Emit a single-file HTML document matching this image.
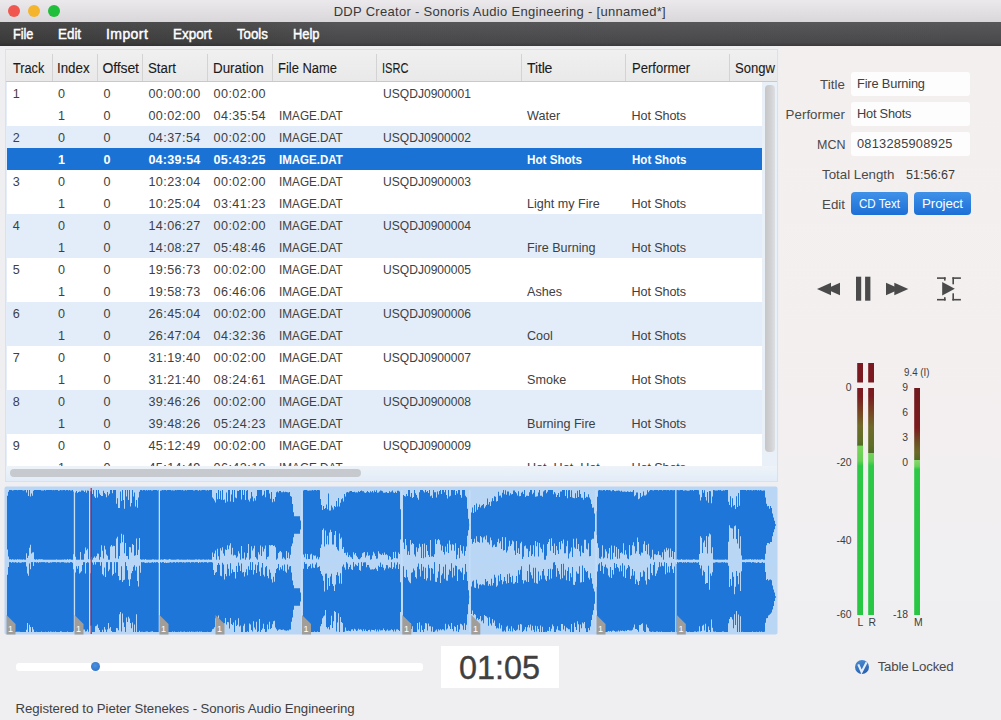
<!DOCTYPE html><html><head><meta charset="utf-8"><style>
html,body{margin:0;padding:0;width:1001px;height:720px;overflow:hidden;position:relative;}
body{font-family:"Liberation Sans",sans-serif;}
.t{position:absolute;white-space:nowrap;line-height:1;}
</style></head><body>
<div style="position:absolute;left:0px;top:0px;width:1001px;height:720px;background:#efeef1;"></div>
<div style="position:absolute;left:779px;top:46px;width:222px;height:674px;background:linear-gradient(#f4efef 0%,#f3eff0 60%,#efeff2 85%);"></div>
<div style="position:absolute;left:0px;top:0px;width:1001px;height:22px;background:linear-gradient(#ebe9eb,#d9d7d9);"></div>
<div style="position:absolute;left:7.55px;top:4.60px;width:12.4px;height:12.4px;border-radius:50%;background:#f0584f;"></div>
<div style="position:absolute;left:27.55px;top:4.60px;width:12.4px;height:12.4px;border-radius:50%;background:#f4b52c;"></div>
<div style="position:absolute;left:47.80px;top:4.60px;width:12.4px;height:12.4px;border-radius:50%;background:#1fbe3b;"></div>
<div class="t" style="left:333.70px;top:5.20px;font-size:13px;color:#383838;letter-spacing:0.294px;">DDP Creator - Sonoris Audio Engineering - [unnamed*]</div>
<div style="position:absolute;left:0px;top:22px;width:1001px;height:24px;background:linear-gradient(rgba(255,255,255,0.05),rgba(0,0,0,0.07) 85%,rgba(0,0,0,0.25)),linear-gradient(to right,#3e3e3e 0px,#454545 250px,#4d4d50 336px,#4f4f52 1001px);"></div>
<div class="t" style="left:12.90px;top:27.15px;font-size:14px;color:#ffffff;transform:scaleX(0.9043);transform-origin:0 0;-webkit-text-stroke:0.45px #ffffff;">File</div>
<div class="t" style="left:58.40px;top:27.15px;font-size:14px;color:#ffffff;transform:scaleX(0.9575);transform-origin:0 0;-webkit-text-stroke:0.45px #ffffff;">Edit</div>
<div class="t" style="left:106.00px;top:27.15px;font-size:14px;color:#ffffff;letter-spacing:0.425px;-webkit-text-stroke:0.45px #ffffff;">Import</div>
<div class="t" style="left:172.50px;top:27.15px;font-size:14px;color:#ffffff;transform:scaleX(0.9589);transform-origin:0 0;-webkit-text-stroke:0.45px #ffffff;">Export</div>
<div class="t" style="left:236.80px;top:27.15px;font-size:14px;color:#ffffff;transform:scaleX(0.9454);transform-origin:0 0;-webkit-text-stroke:0.45px #ffffff;">Tools</div>
<div class="t" style="left:292.80px;top:27.15px;font-size:14px;color:#ffffff;transform:scaleX(0.9203);transform-origin:0 0;-webkit-text-stroke:0.45px #ffffff;">Help</div>
<div style="position:absolute;left:5px;top:49px;width:773px;height:433px;background:#e4edf8;border:1px solid #dde1e7;box-sizing:border-box;"></div>
<div style="position:absolute;left:6px;top:50px;width:771px;height:32px;background:linear-gradient(#f0f0f0,#e9e9e9);border-bottom:1px solid #c9c9c9;box-sizing:border-box;"></div>
<div style="position:absolute;left:52px;top:54px;width:1px;height:27px;background:#d3d3d3;"></div>
<div style="position:absolute;left:97px;top:54px;width:1px;height:27px;background:#d3d3d3;"></div>
<div style="position:absolute;left:142px;top:54px;width:1px;height:27px;background:#d3d3d3;"></div>
<div style="position:absolute;left:207px;top:54px;width:1px;height:27px;background:#d3d3d3;"></div>
<div style="position:absolute;left:272px;top:54px;width:1px;height:27px;background:#d3d3d3;"></div>
<div style="position:absolute;left:376px;top:54px;width:1px;height:27px;background:#d3d3d3;"></div>
<div style="position:absolute;left:521px;top:54px;width:1px;height:27px;background:#d3d3d3;"></div>
<div style="position:absolute;left:625px;top:54px;width:1px;height:27px;background:#d3d3d3;"></div>
<div style="position:absolute;left:729px;top:54px;width:1px;height:27px;background:#d3d3d3;"></div>
<div style="position:absolute;left:7px;top:82px;width:756px;height:384px;overflow:hidden;background:#fff;">
<div style="position:absolute;left:0;top:0px;width:756px;height:22px;background:#ffffff;"></div>
<div style="position:absolute;left:0;top:22px;width:756px;height:22px;background:#ffffff;"></div>
<div style="position:absolute;left:0;top:44px;width:756px;height:22px;background:#e3edf9;"></div>
<div style="position:absolute;left:0;top:66px;width:756px;height:22px;background:#1a72d4;"></div>
<div style="position:absolute;left:0;top:88px;width:756px;height:22px;background:#ffffff;"></div>
<div style="position:absolute;left:0;top:110px;width:756px;height:22px;background:#ffffff;"></div>
<div style="position:absolute;left:0;top:132px;width:756px;height:22px;background:#e3edf9;"></div>
<div style="position:absolute;left:0;top:154px;width:756px;height:22px;background:#e3edf9;"></div>
<div style="position:absolute;left:0;top:176px;width:756px;height:22px;background:#ffffff;"></div>
<div style="position:absolute;left:0;top:198px;width:756px;height:22px;background:#ffffff;"></div>
<div style="position:absolute;left:0;top:220px;width:756px;height:22px;background:#e3edf9;"></div>
<div style="position:absolute;left:0;top:242px;width:756px;height:22px;background:#e3edf9;"></div>
<div style="position:absolute;left:0;top:264px;width:756px;height:22px;background:#ffffff;"></div>
<div style="position:absolute;left:0;top:286px;width:756px;height:22px;background:#ffffff;"></div>
<div style="position:absolute;left:0;top:308px;width:756px;height:22px;background:#e3edf9;"></div>
<div style="position:absolute;left:0;top:330px;width:756px;height:22px;background:#e3edf9;"></div>
<div style="position:absolute;left:0;top:352px;width:756px;height:22px;background:#ffffff;"></div>
<div style="position:absolute;left:0;top:374px;width:756px;height:22px;background:#ffffff;"></div>
<div class="t" style="left:5.70px;top:5.83px;font-size:12.6px;color:#404040;">1</div>
<div class="t" style="left:51.00px;top:5.83px;font-size:12.6px;color:#404040;">0</div>
<div class="t" style="left:96.50px;top:5.83px;font-size:12.6px;color:#404040;">0</div>
<div class="t" style="left:141.40px;top:5.83px;font-size:12.6px;color:#404040;letter-spacing:0.422px;">00:00:00</div>
<div class="t" style="left:206.60px;top:5.83px;font-size:12.6px;color:#404040;letter-spacing:0.422px;">00:02:00</div>
<div class="t" style="left:375.50px;top:5.83px;font-size:12.6px;color:#404040;transform:scaleX(0.9590);transform-origin:0 0;">USQDJ0900001</div>
<div class="t" style="left:51.00px;top:27.83px;font-size:12.6px;color:#404040;">1</div>
<div class="t" style="left:96.50px;top:27.83px;font-size:12.6px;color:#404040;">0</div>
<div class="t" style="left:141.40px;top:27.83px;font-size:12.6px;color:#404040;letter-spacing:0.422px;">00:02:00</div>
<div class="t" style="left:206.60px;top:27.83px;font-size:12.6px;color:#404040;letter-spacing:0.422px;">04:35:54</div>
<div class="t" style="left:271.75px;top:27.83px;font-size:12.6px;color:#404040;transform:scaleX(0.9324);transform-origin:0 0;">IMAGE.DAT</div>
<div class="t" style="left:520.00px;top:27.83px;font-size:12.6px;color:#404040;">Water</div>
<div class="t" style="left:624.50px;top:27.83px;font-size:12.6px;color:#404040;letter-spacing:-0.104px;">Hot Shots</div>
<div class="t" style="left:5.70px;top:49.83px;font-size:12.6px;color:#404040;">2</div>
<div class="t" style="left:51.00px;top:49.83px;font-size:12.6px;color:#404040;">0</div>
<div class="t" style="left:96.50px;top:49.83px;font-size:12.6px;color:#404040;">0</div>
<div class="t" style="left:141.40px;top:49.83px;font-size:12.6px;color:#404040;letter-spacing:0.422px;">04:37:54</div>
<div class="t" style="left:206.60px;top:49.83px;font-size:12.6px;color:#404040;letter-spacing:0.422px;">00:02:00</div>
<div class="t" style="left:271.75px;top:49.83px;font-size:12.6px;color:#404040;transform:scaleX(0.9324);transform-origin:0 0;">IMAGE.DAT</div>
<div class="t" style="left:375.50px;top:49.83px;font-size:12.6px;color:#404040;transform:scaleX(0.9590);transform-origin:0 0;">USQDJ0900002</div>
<div class="t" style="left:51.00px;top:71.83px;font-size:12.6px;color:#ffffff;font-weight:bold;">1</div>
<div class="t" style="left:96.50px;top:71.83px;font-size:12.6px;color:#ffffff;font-weight:bold;">0</div>
<div class="t" style="left:141.40px;top:71.83px;font-size:12.6px;color:#ffffff;font-weight:bold;letter-spacing:0.223px;">04:39:54</div>
<div class="t" style="left:206.60px;top:71.83px;font-size:12.6px;color:#ffffff;font-weight:bold;letter-spacing:0.223px;">05:43:25</div>
<div class="t" style="left:271.75px;top:71.83px;font-size:12.6px;color:#ffffff;font-weight:bold;transform:scaleX(0.9138);transform-origin:0 0;">IMAGE.DAT</div>
<div class="t" style="left:520.00px;top:71.83px;font-size:12.6px;color:#ffffff;font-weight:bold;transform:scaleX(0.9244);transform-origin:0 0;">Hot Shots</div>
<div class="t" style="left:624.50px;top:71.83px;font-size:12.6px;color:#ffffff;font-weight:bold;transform:scaleX(0.9160);transform-origin:0 0;">Hot Shots</div>
<div class="t" style="left:5.70px;top:93.83px;font-size:12.6px;color:#404040;">3</div>
<div class="t" style="left:51.00px;top:93.83px;font-size:12.6px;color:#404040;">0</div>
<div class="t" style="left:96.50px;top:93.83px;font-size:12.6px;color:#404040;">0</div>
<div class="t" style="left:141.40px;top:93.83px;font-size:12.6px;color:#404040;letter-spacing:0.422px;">10:23:04</div>
<div class="t" style="left:206.60px;top:93.83px;font-size:12.6px;color:#404040;letter-spacing:0.422px;">00:02:00</div>
<div class="t" style="left:271.75px;top:93.83px;font-size:12.6px;color:#404040;transform:scaleX(0.9324);transform-origin:0 0;">IMAGE.DAT</div>
<div class="t" style="left:375.50px;top:93.83px;font-size:12.6px;color:#404040;transform:scaleX(0.9590);transform-origin:0 0;">USQDJ0900003</div>
<div class="t" style="left:51.00px;top:115.83px;font-size:12.6px;color:#404040;">1</div>
<div class="t" style="left:96.50px;top:115.83px;font-size:12.6px;color:#404040;">0</div>
<div class="t" style="left:141.40px;top:115.83px;font-size:12.6px;color:#404040;letter-spacing:0.422px;">10:25:04</div>
<div class="t" style="left:206.60px;top:115.83px;font-size:12.6px;color:#404040;letter-spacing:0.422px;">03:41:23</div>
<div class="t" style="left:271.75px;top:115.83px;font-size:12.6px;color:#404040;transform:scaleX(0.9324);transform-origin:0 0;">IMAGE.DAT</div>
<div class="t" style="left:520.00px;top:115.83px;font-size:12.6px;color:#404040;">Light my Fire</div>
<div class="t" style="left:624.50px;top:115.83px;font-size:12.6px;color:#404040;letter-spacing:-0.104px;">Hot Shots</div>
<div class="t" style="left:5.70px;top:137.83px;font-size:12.6px;color:#404040;">4</div>
<div class="t" style="left:51.00px;top:137.83px;font-size:12.6px;color:#404040;">0</div>
<div class="t" style="left:96.50px;top:137.83px;font-size:12.6px;color:#404040;">0</div>
<div class="t" style="left:141.40px;top:137.83px;font-size:12.6px;color:#404040;letter-spacing:0.422px;">14:06:27</div>
<div class="t" style="left:206.60px;top:137.83px;font-size:12.6px;color:#404040;letter-spacing:0.422px;">00:02:00</div>
<div class="t" style="left:271.75px;top:137.83px;font-size:12.6px;color:#404040;transform:scaleX(0.9324);transform-origin:0 0;">IMAGE.DAT</div>
<div class="t" style="left:375.50px;top:137.83px;font-size:12.6px;color:#404040;transform:scaleX(0.9590);transform-origin:0 0;">USQDJ0900004</div>
<div class="t" style="left:51.00px;top:159.83px;font-size:12.6px;color:#404040;">1</div>
<div class="t" style="left:96.50px;top:159.83px;font-size:12.6px;color:#404040;">0</div>
<div class="t" style="left:141.40px;top:159.83px;font-size:12.6px;color:#404040;letter-spacing:0.422px;">14:08:27</div>
<div class="t" style="left:206.60px;top:159.83px;font-size:12.6px;color:#404040;letter-spacing:0.422px;">05:48:46</div>
<div class="t" style="left:271.75px;top:159.83px;font-size:12.6px;color:#404040;transform:scaleX(0.9324);transform-origin:0 0;">IMAGE.DAT</div>
<div class="t" style="left:520.00px;top:159.83px;font-size:12.6px;color:#404040;">Fire Burning</div>
<div class="t" style="left:624.50px;top:159.83px;font-size:12.6px;color:#404040;letter-spacing:-0.104px;">Hot Shots</div>
<div class="t" style="left:5.70px;top:181.83px;font-size:12.6px;color:#404040;">5</div>
<div class="t" style="left:51.00px;top:181.83px;font-size:12.6px;color:#404040;">0</div>
<div class="t" style="left:96.50px;top:181.83px;font-size:12.6px;color:#404040;">0</div>
<div class="t" style="left:141.40px;top:181.83px;font-size:12.6px;color:#404040;letter-spacing:0.422px;">19:56:73</div>
<div class="t" style="left:206.60px;top:181.83px;font-size:12.6px;color:#404040;letter-spacing:0.422px;">00:02:00</div>
<div class="t" style="left:271.75px;top:181.83px;font-size:12.6px;color:#404040;transform:scaleX(0.9324);transform-origin:0 0;">IMAGE.DAT</div>
<div class="t" style="left:375.50px;top:181.83px;font-size:12.6px;color:#404040;transform:scaleX(0.9590);transform-origin:0 0;">USQDJ0900005</div>
<div class="t" style="left:51.00px;top:203.83px;font-size:12.6px;color:#404040;">1</div>
<div class="t" style="left:96.50px;top:203.83px;font-size:12.6px;color:#404040;">0</div>
<div class="t" style="left:141.40px;top:203.83px;font-size:12.6px;color:#404040;letter-spacing:0.422px;">19:58:73</div>
<div class="t" style="left:206.60px;top:203.83px;font-size:12.6px;color:#404040;letter-spacing:0.422px;">06:46:06</div>
<div class="t" style="left:271.75px;top:203.83px;font-size:12.6px;color:#404040;transform:scaleX(0.9324);transform-origin:0 0;">IMAGE.DAT</div>
<div class="t" style="left:520.00px;top:203.83px;font-size:12.6px;color:#404040;">Ashes</div>
<div class="t" style="left:624.50px;top:203.83px;font-size:12.6px;color:#404040;letter-spacing:-0.104px;">Hot Shots</div>
<div class="t" style="left:5.70px;top:225.83px;font-size:12.6px;color:#404040;">6</div>
<div class="t" style="left:51.00px;top:225.83px;font-size:12.6px;color:#404040;">0</div>
<div class="t" style="left:96.50px;top:225.83px;font-size:12.6px;color:#404040;">0</div>
<div class="t" style="left:141.40px;top:225.83px;font-size:12.6px;color:#404040;letter-spacing:0.422px;">26:45:04</div>
<div class="t" style="left:206.60px;top:225.83px;font-size:12.6px;color:#404040;letter-spacing:0.422px;">00:02:00</div>
<div class="t" style="left:271.75px;top:225.83px;font-size:12.6px;color:#404040;transform:scaleX(0.9324);transform-origin:0 0;">IMAGE.DAT</div>
<div class="t" style="left:375.50px;top:225.83px;font-size:12.6px;color:#404040;transform:scaleX(0.9590);transform-origin:0 0;">USQDJ0900006</div>
<div class="t" style="left:51.00px;top:247.83px;font-size:12.6px;color:#404040;">1</div>
<div class="t" style="left:96.50px;top:247.83px;font-size:12.6px;color:#404040;">0</div>
<div class="t" style="left:141.40px;top:247.83px;font-size:12.6px;color:#404040;letter-spacing:0.422px;">26:47:04</div>
<div class="t" style="left:206.60px;top:247.83px;font-size:12.6px;color:#404040;letter-spacing:0.422px;">04:32:36</div>
<div class="t" style="left:271.75px;top:247.83px;font-size:12.6px;color:#404040;transform:scaleX(0.9324);transform-origin:0 0;">IMAGE.DAT</div>
<div class="t" style="left:520.00px;top:247.83px;font-size:12.6px;color:#404040;">Cool</div>
<div class="t" style="left:624.50px;top:247.83px;font-size:12.6px;color:#404040;letter-spacing:-0.104px;">Hot Shots</div>
<div class="t" style="left:5.70px;top:269.83px;font-size:12.6px;color:#404040;">7</div>
<div class="t" style="left:51.00px;top:269.83px;font-size:12.6px;color:#404040;">0</div>
<div class="t" style="left:96.50px;top:269.83px;font-size:12.6px;color:#404040;">0</div>
<div class="t" style="left:141.40px;top:269.83px;font-size:12.6px;color:#404040;letter-spacing:0.422px;">31:19:40</div>
<div class="t" style="left:206.60px;top:269.83px;font-size:12.6px;color:#404040;letter-spacing:0.422px;">00:02:00</div>
<div class="t" style="left:271.75px;top:269.83px;font-size:12.6px;color:#404040;transform:scaleX(0.9324);transform-origin:0 0;">IMAGE.DAT</div>
<div class="t" style="left:375.50px;top:269.83px;font-size:12.6px;color:#404040;transform:scaleX(0.9590);transform-origin:0 0;">USQDJ0900007</div>
<div class="t" style="left:51.00px;top:291.83px;font-size:12.6px;color:#404040;">1</div>
<div class="t" style="left:96.50px;top:291.83px;font-size:12.6px;color:#404040;">0</div>
<div class="t" style="left:141.40px;top:291.83px;font-size:12.6px;color:#404040;letter-spacing:0.422px;">31:21:40</div>
<div class="t" style="left:206.60px;top:291.83px;font-size:12.6px;color:#404040;letter-spacing:0.422px;">08:24:61</div>
<div class="t" style="left:271.75px;top:291.83px;font-size:12.6px;color:#404040;transform:scaleX(0.9324);transform-origin:0 0;">IMAGE.DAT</div>
<div class="t" style="left:520.00px;top:291.83px;font-size:12.6px;color:#404040;">Smoke</div>
<div class="t" style="left:624.50px;top:291.83px;font-size:12.6px;color:#404040;letter-spacing:-0.104px;">Hot Shots</div>
<div class="t" style="left:5.70px;top:313.83px;font-size:12.6px;color:#404040;">8</div>
<div class="t" style="left:51.00px;top:313.83px;font-size:12.6px;color:#404040;">0</div>
<div class="t" style="left:96.50px;top:313.83px;font-size:12.6px;color:#404040;">0</div>
<div class="t" style="left:141.40px;top:313.83px;font-size:12.6px;color:#404040;letter-spacing:0.422px;">39:46:26</div>
<div class="t" style="left:206.60px;top:313.83px;font-size:12.6px;color:#404040;letter-spacing:0.422px;">00:02:00</div>
<div class="t" style="left:271.75px;top:313.83px;font-size:12.6px;color:#404040;transform:scaleX(0.9324);transform-origin:0 0;">IMAGE.DAT</div>
<div class="t" style="left:375.50px;top:313.83px;font-size:12.6px;color:#404040;transform:scaleX(0.9590);transform-origin:0 0;">USQDJ0900008</div>
<div class="t" style="left:51.00px;top:335.83px;font-size:12.6px;color:#404040;">1</div>
<div class="t" style="left:96.50px;top:335.83px;font-size:12.6px;color:#404040;">0</div>
<div class="t" style="left:141.40px;top:335.83px;font-size:12.6px;color:#404040;letter-spacing:0.422px;">39:48:26</div>
<div class="t" style="left:206.60px;top:335.83px;font-size:12.6px;color:#404040;letter-spacing:0.422px;">05:24:23</div>
<div class="t" style="left:271.75px;top:335.83px;font-size:12.6px;color:#404040;transform:scaleX(0.9324);transform-origin:0 0;">IMAGE.DAT</div>
<div class="t" style="left:520.00px;top:335.83px;font-size:12.6px;color:#404040;">Burning Fire</div>
<div class="t" style="left:624.50px;top:335.83px;font-size:12.6px;color:#404040;letter-spacing:-0.104px;">Hot Shots</div>
<div class="t" style="left:5.70px;top:357.83px;font-size:12.6px;color:#404040;">9</div>
<div class="t" style="left:51.00px;top:357.83px;font-size:12.6px;color:#404040;">0</div>
<div class="t" style="left:96.50px;top:357.83px;font-size:12.6px;color:#404040;">0</div>
<div class="t" style="left:141.40px;top:357.83px;font-size:12.6px;color:#404040;letter-spacing:0.422px;">45:12:49</div>
<div class="t" style="left:206.60px;top:357.83px;font-size:12.6px;color:#404040;letter-spacing:0.422px;">00:02:00</div>
<div class="t" style="left:271.75px;top:357.83px;font-size:12.6px;color:#404040;transform:scaleX(0.9324);transform-origin:0 0;">IMAGE.DAT</div>
<div class="t" style="left:375.50px;top:357.83px;font-size:12.6px;color:#404040;transform:scaleX(0.9590);transform-origin:0 0;">USQDJ0900009</div>
<div class="t" style="left:51.00px;top:379.83px;font-size:12.6px;color:#404040;">1</div>
<div class="t" style="left:96.50px;top:379.83px;font-size:12.6px;color:#404040;">0</div>
<div class="t" style="left:141.40px;top:379.83px;font-size:12.6px;color:#404040;letter-spacing:0.422px;">45:14:49</div>
<div class="t" style="left:206.60px;top:379.83px;font-size:12.6px;color:#404040;letter-spacing:0.422px;">06:42:18</div>
<div class="t" style="left:271.75px;top:379.83px;font-size:12.6px;color:#404040;transform:scaleX(0.9324);transform-origin:0 0;">IMAGE.DAT</div>
<div class="t" style="left:520.00px;top:379.83px;font-size:12.6px;color:#404040;">Hot, Hot, Hot</div>
<div class="t" style="left:624.50px;top:379.83px;font-size:12.6px;color:#404040;letter-spacing:-0.104px;">Hot Shots</div>
</div>
<div class="t" style="left:12.70px;top:60.75px;font-size:14px;color:#1a1a1a;transform:scaleX(0.9077);transform-origin:0 0;-webkit-text-stroke:0.1px #1a1a1a;">Track</div>
<div class="t" style="left:57.40px;top:60.75px;font-size:14px;color:#1a1a1a;transform:scaleX(0.9519);transform-origin:0 0;-webkit-text-stroke:0.1px #1a1a1a;">Index</div>
<div class="t" style="left:102.50px;top:60.75px;font-size:14px;color:#1a1a1a;letter-spacing:-0.118px;-webkit-text-stroke:0.1px #1a1a1a;">Offset</div>
<div class="t" style="left:147.60px;top:60.75px;font-size:14px;color:#1a1a1a;transform:scaleX(0.9470);transform-origin:0 0;-webkit-text-stroke:0.1px #1a1a1a;">Start</div>
<div class="t" style="left:213.00px;top:60.75px;font-size:14px;color:#1a1a1a;transform:scaleX(0.9562);transform-origin:0 0;-webkit-text-stroke:0.1px #1a1a1a;">Duration</div>
<div class="t" style="left:277.50px;top:60.75px;font-size:14px;color:#1a1a1a;transform:scaleX(0.9248);transform-origin:0 0;-webkit-text-stroke:0.1px #1a1a1a;">File Name</div>
<div class="t" style="left:381.60px;top:60.75px;font-size:14px;color:#1a1a1a;transform:scaleX(0.7893);transform-origin:0 0;-webkit-text-stroke:0.1px #1a1a1a;">ISRC</div>
<div class="t" style="left:527.00px;top:60.75px;font-size:14px;color:#1a1a1a;letter-spacing:-0.132px;-webkit-text-stroke:0.1px #1a1a1a;">Title</div>
<div class="t" style="left:631.50px;top:60.75px;font-size:14px;color:#1a1a1a;transform:scaleX(0.9319);transform-origin:0 0;-webkit-text-stroke:0.1px #1a1a1a;">Performer</div>
<div class="t" style="left:735.00px;top:60.75px;font-size:14px;color:#1a1a1a;transform:scaleX(0.9344);transform-origin:0 0;-webkit-text-stroke:0.1px #1a1a1a;">Songw</div>
<div style="position:absolute;left:762px;top:82px;width:15px;height:384px;background:#eaf0f7;"></div>
<div style="position:absolute;left:764.5px;top:84.7px;width:10px;height:367.6px;background:linear-gradient(to right,#c6c6c8,#d2d2d4 60%,#dedfe2);border-radius:4px;"></div>
<div style="position:absolute;left:6px;top:466px;width:771px;height:15px;background:linear-gradient(#eef3f9,#e2ecf8);"></div>
<div style="position:absolute;left:10px;top:469px;width:351px;height:8px;background:#c6c9cd;border-radius:4px;"></div>
<svg style="position:absolute;left:0;top:0" width="1001" height="720">
<rect x="4.5" y="486.5" width="773" height="148" rx="2" fill="#b9d6f5"/>
<path d="M7,495.8H8V491.7H9V490.0H10V490.0H11V490.0H12V490.5H13V490.3H14V490.0H15V490.0H16V490.0H17V490.3H18V490.1H19V490.0H20V490.0H21V490.0H22V490.2H23V490.4H24V490.3H25V490.0H26V492.4H27V490.0H28V495.9H29V490.0H30V496.6H31V493.4H32V495.7H33V490.8H34V490.0H35V490.0H36V490.0H37V490.0H38V490.0H39V490.0H40V490.0H41V490.4H42V490.6H43V490.5H44V490.0H45V490.6H46V490.0H47V490.0H48V490.0H49V490.0H50V490.0H51V490.0H52V490.2H53V490.0H54V490.2H55V490.0H56V490.0H57V490.1H58V490.7H59V490.6H60V490.0H61V490.3H62V490.2H63V490.1H64V490.0H65V490.4H66V490.0H67V490.0H68V490.4H69V490.0H70V490.5H71V490.6H72V490.0H73V491.5H74V492.1H75V492.6H76V491.0H77V493.0H78V492.1H79V491.6H80V491.8H81V490.4H82V490.4H83V490.7H84V492.1H85V490.6H86V492.8H87V490.6H88V490.8H89V491.0H90V491.2H91V491.2H92V494.1H93V490.0H94V496.6H95V498.0H96V490.0H97V497.4H98V490.0H99V493.5H100V495.0H101V496.1H102V496.0H103V490.8H104V493.1H105V494.3H106V497.3H107V491.9H108V495.4H109V493.7H110V490.0H111V490.0H112V493.2H113V490.0H114V490.0H115V490.0H116V503.8H117V498.2H118V507.9H119V508.1H120V491.4H121V500.9H122V490.0H123V500.0H124V508.7H125V490.0H126V496.4H127V490.0H128V500.0H129V490.0H130V506.4H131V502.9H132V490.0H133V496.4H134V492.5H135V506.5H136V500.1H137V507.7H138V497.4H139V491.7H140V490.0H141V490.0H142V490.5H143V490.0H144V490.0H145V490.6H146V490.0H147V490.6H148V490.0H149V490.3H150V490.0H151V490.4H152V490.6H153V490.0H154V490.1H155V490.0H156V490.0H157V490.4H158V490.0H159V490.0H160V490.7H161V490.6H162V490.0H163V490.2H164V490.0H165V490.0H166V490.4H167V490.0H168V490.0H169V490.0H170V490.0H171V490.5H172V490.3H173V490.6H174V490.6H175V490.0H176V490.2H177V490.0H178V490.1H179V490.0H180V490.0H181V490.2H182V490.0H183V490.4H184V490.5H185V490.0H186V490.4H187V490.0H188V490.0H189V490.0H190V490.0H191V490.0H192V490.0H193V490.4H194V490.4H195V490.0H196V490.0H197V490.2H198V490.7H199V490.0H200V490.6H201V490.2H202V490.0H203V490.0H204V490.0H205V490.2H206V490.5H207V490.0H208V490.6H209V490.0H210V490.0H211V490.0H212V497.5H213V498.7H214V500.4H215V502.4H216V493.1H217V499.3H218V490.0H219V498.9H220V490.8H221V499.7H222V490.0H223V499.9H224V499.6H225V502.7H226V492.4H227V501.5H228V490.0H229V490.0H230V501.4H231V494.4H232V490.0H233V502.1H234V490.0H235V497.6H236V498.2H237V490.8H238V490.9H239V490.0H240V490.0H241V499.6H242V490.0H243V495.0H244V490.0H245V500.0H246V490.8H247V490.0H248V499.7H249V501.5H250V498.5H251V492.1H252V496.4H253V501.3H254V498.2H255V500.6H256V496.1H257V490.0H258V490.0H259V490.0H260V490.0H261V490.0H262V495.8H263V494.7H264V490.7H265V497.3H266V490.0H267V490.0H268V490.0H269V493.5H270V498.8H271V492.1H272V502.3H273V499.0H274V501.5H275V496.9H276V492.3H277V491.5H278V492.6H279V491.1H280V491.0H281V492.2H282V492.3H283V491.6H284V492.3H285V491.7H286V491.9H287V492.3H288V492.4H289V491.9H290V495.9H291V496.8H292V504.0H293V512.3H294V516.2H295V516.2H296V516.2H297V516.2H298V516.2H299V516.2H300V520.6H301V525.0H302V525.0H303V490.4H304V490.0H305V490.0H306V490.0H307V490.4H308V490.7H309V490.5H310V490.5H311V490.4H312V490.0H313V490.6H314V490.0H315V490.0H316V490.6H317V490.0H318V490.0H319V490.3H320V499.0H321V505.0H322V509.9H323V506.1H324V509.0H325V507.9H326V504.5H327V509.2H328V493.6H329V510.4H330V510.4H331V505.5H332V507.6H333V509.5H334V505.9H335V507.0H336V500.9H337V506.6H338V498.0H339V506.6H340V502.8H341V499.2H342V498.2H343V501.4H344V494.1H345V496.5H346V492.4H347V492.1H348V492.6H349V491.6H350V490.9H351V491.0H352V492.1H353V492.0H354V491.8H355V492.5H356V492.3H357V492.4H358V491.2H359V492.0H360V491.0H361V490.5H362V491.2H363V491.3H364V492.5H365V492.9H366V492.2H367V491.1H368V492.1H369V492.7H370V491.2H371V492.2H372V490.9H373V492.4H374V490.5H375V491.9H376V490.2H377V492.8H378V492.5H379V491.6H380V490.5H381V490.7H382V491.2H383V492.7H384V492.7H385V492.6H386V491.9H387V493.1H388V493.0H389V491.2H390V492.3H391V491.4H392V490.4H393V492.5H394V492.9H395V491.8H396V492.9H397V490.8H398V490.7H399V491.6H400V509.2H401V525.0H402V525.0H403V495.0H404V496.1H405V496.4H406V494.1H407V495.9H408V490.0H409V490.0H410V496.8H411V492.9H412V498.0H413V497.1H414V490.0H415V493.3H416V494.9H417V497.8H418V499.7H419V492.3H420V490.0H421V490.0H422V490.0H423V491.2H424V492.6H425V490.0H426V491.9H427V491.1H428V493.0H429V490.0H430V496.3H431V495.5H432V498.1H433V490.0H434V492.3H435V492.3H436V497.5H437V491.6H438V494.4H439V491.0H440V490.0H441V494.1H442V490.0H443V490.0H444V492.3H445V490.0H446V494.9H447V498.5H448V490.0H449V496.5H450V495.7H451V490.0H452V490.0H453V490.3H454V490.0H455V495.0H456V490.9H457V493.5H458V490.0H459V490.0H460V495.1H461V497.8H462V490.0H463V490.0H464V490.0H465V495.8H466V497.2H467V508.7H468V518.8H469V523.8H470V525.0H471V512.6H472V507.4H473V513.1H474V505.1H475V511.7H476V503.5H477V509.8H478V507.1H479V504.5H480V507.4H481V505.8H482V505.1H483V504.1H484V508.3H485V506.5H486V505.0H487V498.4H488V504.6H489V502.0H490V505.9H491V501.6H492V498.2H493V500.9H494V496.3H495V496.7H496V501.6H497V501.0H498V491.8H499V495.8H500V495.5H501V497.6H502V492.7H503V490.0H504V494.2H505V490.3H506V494.7H507V491.5H508V491.5H509V495.5H510V493.3H511V494.4H512V493.9H513V490.6H514V490.5H515V492.1H516V493.2H517V495.6H518V491.2H519V496.2H520V496.0H521V492.7H522V491.8H523V493.9H524V490.0H525V497.1H526V495.7H527V495.7H528V496.0H529V492.3H530V490.0H531V490.0H532V494.3H533V492.8H534V490.0H535V496.8H536V496.4H537V496.3H538V492.4H539V490.0H540V495.8H541V495.8H542V496.8H543V491.5H544V490.6H545V490.0H546V493.3H547V491.7H548V490.0H549V490.0H550V490.1H551V490.0H552V490.0H553V494.2H554V491.9H555V493.5H556V497.0H557V495.0H558V493.1H559V496.9H560V491.6H561V491.4H562V490.0H563V490.0H564V490.0H565V495.9H566V490.0H567V498.2H568V490.3H569V490.0H570V497.0H571V490.2H572V497.5H573V497.9H574V498.2H575V493.3H576V498.1H577V490.7H578V496.9H579V490.0H580V493.9H581V497.8H582V497.8H583V499.8H584V492.1H585V498.0H586V496.8H587V497.2H588V494.3H589V497.6H590V499.6H591V504.0H592V507.8H593V507.4H594V513.6H595V525.0H596V511.2H597V496.7H598V490.6H599V490.0H600V490.3H601V490.2H602V490.5H603V490.0H604V490.0H605V490.7H606V490.0H607V490.0H608V490.2H609V490.0H610V490.4H611V491.3H612V490.2H613V490.1H614V491.1H615V491.2H616V490.8H617V490.7H618V490.4H619V490.8H620V491.5H621V490.7H622V491.7H623V491.7H624V491.4H625V491.7H626V492.0H627V491.2H628V491.8H629V491.9H630V491.5H631V491.9H632V491.7H633V490.0H634V496.3H635V495.3H636V492.5H637V492.5H638V499.2H639V498.4H640V493.1H641V497.0H642V495.7H643V491.6H644V495.6H645V495.4H646V494.6H647V490.3H648V492.3H649V490.7H650V490.0H651V490.0H652V490.3H653V490.5H654V490.0H655V490.0H656V490.0H657V490.0H658V490.4H659V490.0H660V490.0H661V490.0H662V490.4H663V490.0H664V490.0H665V490.0H666V490.2H667V490.0H668V490.0H669V490.6H670V490.1H671V490.0H672V490.2H673V490.2H674V490.0H675V490.0H676V490.2H677V490.0H678V490.3H679V490.2H680V490.0H681V490.0H682V490.0H683V490.7H684V490.5H685V490.3H686V490.4H687V490.8H688V490.7H689V490.5H690V490.0H691V490.3H692V490.0H693V490.7H694V490.0H695V490.0H696V490.0H697V490.0H698V490.3H699V494.6H700V500.5H701V497.2H702V490.0H703V492.8H704V490.3H705V497.1H706V500.4H707V491.9H708V502.7H709V491.0H710V491.2H711V503.2H712V496.6H713V490.0H714V490.3H715V490.4H716V490.4H717V490.6H718V490.0H719V490.2H720V490.1H721V490.8H722V490.7H723V490.2H724V490.5H725V490.0H726V490.0H727V490.0H728V501.7H729V504.9H730V496.3H731V507.3H732V498.2H733V505.8H734V505.1H735V508.9H736V496.3H737V506.9H738V493.0H739V505.8H740V490.0H741V490.0H742V490.0H743V490.0H744V490.0H745V490.0H746V490.4H747V490.0H748V490.0H749V490.3H750V490.1H751V490.3H752V490.5H753V490.0H754V490.3H755V490.0H756V490.0H757V490.6H758V490.0H759V490.6H760V490.0H761V490.5H762V490.7H763V490.5H764V490.6H765V497.5H766V503.8H767V506.2H768V506.0H769V508.8H770V505.9H771V508.1H772V513.4H773V517.5H774V520.8H775V524.3H776V525.7H775V529.2H774V532.3H773V536.2H772V541.9H771V542.1H770V543.7H769V543.1H768V543.1H767V545.2H766V553.7H765V560.0H764V560.0H763V559.2H762V559.2H761V560.0H760V559.8H759V560.0H758V559.4H757V560.0H756V559.5H755V559.6H754V560.0H753V559.4H752V560.0H751V559.1H750V559.5H749V559.6H748V559.8H747V559.6H746V559.4H745V560.0H744V560.0H743V560.0H742V555.6H741V536.3H740V548.6H739V529.0H738V543.5H737V539.1H736V525.6H735V526.2H734V538.8H733V528.6H732V528.3H731V527.7H730V525.3H729V541.7H728V560.0H727V560.0H726V559.4H725V560.0H724V560.0H723V560.0H722V560.0H721V560.0H720V560.0H719V560.0H718V559.7H717V560.0H716V560.0H715V559.8H714V559.5H713V547.2H712V553.2H711V534.5H710V533.4H709V536.6H708V553.5H707V535.9H706V546.9H705V540.6H704V542.6H703V553.1H702V537.7H701V536.3H700V554.1H699V560.0H698V560.0H697V560.0H696V560.0H695V559.4H694V559.3H693V560.0H692V560.0H691V560.0H690V560.0H689V559.8H688V560.0H687V559.4H686V560.0H685V560.0H684V560.0H683V560.0H682V559.0H681V560.0H680V560.0H679V560.0H678V559.6H677V560.0H676V560.0H675V552.1H674V559.0H673V551.0H672V557.0H671V548.5H670V557.5H669V548.4H668V550.3H667V547.7H666V551.7H665V549.5H664V559.9H663V552.3H662V557.3H661V555.3H660V555.1H659V551.2H658V554.6H657V555.0H656V554.3H655V554.3H654V560.0H653V549.8H652V557.2H651V558.7H650V555.5H649V543.7H648V554.3H647V545.1H646V551.1H645V541.2H644V544.2H643V552.8H642V552.6H641V555.5H640V554.1H639V542.0H638V537.5H637V551.2H636V553.5H635V546.2H634V542.2H633V545.2H632V555.0H631V555.4H630V545.0H629V559.3H628V558.4H627V554.4H626V550.3H625V554.7H624V543.3H623V553.6H622V552.2H621V552.9H620V558.6H619V548.9H618V558.8H617V547.0H616V556.7H615V545.7H614V552.8H613V559.3H612V545.5H611V559.8H610V547.9H609V553.6H608V558.3H607V551.6H606V549.2H605V557.6H604V558.5H603V545.2H602V556.8H601V558.8H600V558.2H599V547.8H598V543.2H597V535.1H596V525.0H595V531.5H594V538.7H593V538.7H592V539.7H591V555.9H590V556.2H589V543.2H588V549.6H587V548.8H586V539.8H585V539.7H584V552.9H583V552.6H582V545.7H581V556.3H580V551.3H579V544.0H578V548.9H577V538.4H576V548.8H575V547.5H574V538.7H573V557.0H572V547.6H571V551.5H570V553.4H569V558.6H568V540.7H567V546.2H566V553.2H565V553.3H564V539.6H563V543.6H562V541.0H561V549.2H560V542.1H559V554.0H558V550.2H557V546.0H556V555.0H555V543.6H554V553.1H553V546.1H552V538.3H551V550.8H550V539.0H549V542.1H548V544.0H547V555.8H546V560.0H545V560.0H544V544.4H543V552.5H542V549.0H541V547.4H540V542.9H539V556.5H538V542.2H537V546.2H536V541.0H535V556.5H534V545.3H533V554.2H532V556.0H531V545.2H530V551.2H529V556.9H528V548.7H527V548.6H526V545.5H525V546.3H524V556.7H523V559.1H522V541.7H521V543.3H520V554.1H519V548.2H518V553.1H517V541.1H516V555.1H515V550.6H514V541.4H513V540.6H512V544.2H511V545.9H510V540.7H509V546.5H508V550.4H507V552.5H506V537.2H505V550.1H504V550.5H503V537.0H502V549.0H501V541.3H500V543.2H499V538.7H498V542.0H497V546.7H496V547.1H495V544.4H494V545.5H493V547.2H492V540.2H491V537.5H490V544.5H489V542.5H488V542.3H487V535.4H486V539.6H485V536.6H484V537.5H483V542.5H482V537.3H481V536.1H480V542.7H479V542.1H478V541.6H477V536.3H476V542.7H475V538.7H474V542.1H473V543.8H472V539.1H471V525.0H470V526.2H469V530.2H468V535.7H467V546.5H466V551.1H465V555.7H464V546.3H463V553.6H462V550.8H461V544.9H460V558.2H459V548.1H458V554.8H457V559.3H456V543.3H455V550.7H454V544.8H453V544.2H452V550.4H451V544.4H450V540.6H449V552.9H448V543.8H447V551.8H446V546.5H445V554.5H444V551.9H443V545.8H442V550.4H441V544.5H440V540.2H439V539.0H438V540.3H437V544.1H436V539.2H435V554.2H434V557.1H433V556.3H432V556.6H431V540.0H430V556.9H429V554.9H428V551.1H427V544.9H426V557.3H425V543.5H424V558.2H423V544.1H422V558.0H421V546.8H420V543.7H419V548.2H418V551.8H417V547.3H416V556.4H415V554.5H414V544.1H413V542.9H412V544.5H411V540.1H410V555.0H409V551.3H408V554.8H407V545.2H406V538.9H405V549.1H404V542.5H403V525.0H402V525.0H401V539.4H400V554.0H399V552.4H398V558.4H397V558.3H396V551.7H395V558.0H394V551.9H393V559.3H392V560.0H391V557.0H390V555.9H389V560.0H388V555.2H387V554.2H386V554.7H385V552.6H384V554.9H383V553.5H382V555.1H381V554.2H380V553.6H379V551.3H378V558.6H377V558.7H376V555.9H375V553.5H374V551.7H373V555.4H372V559.3H371V560.0H370V555.3H369V555.7H368V552.3H367V555.5H366V557.4H365V551.9H364V552.6H363V553.2H362V557.1H361V558.2H360V559.4H359V559.1H358V557.2H357V555.8H356V552.9H355V554.5H354V552.2H353V559.1H352V557.5H351V556.7H350V555.2H349V557.1H348V552.6H347V555.2H346V552.7H345V552.9H344V546.9H343V548.9H342V537.4H341V538.7H340V533.6H339V550.8H338V549.6H337V547.1H336V530.9H335V535.1H334V544.6H333V544.5H332V531.9H331V529.8H330V532.5H329V544.4H328V535.7H327V544.3H326V530.6H325V546.6H324V528.6H323V530.0H322V544.6H321V547.9H320V557.3H319V559.5H318V556.7H317V558.4H316V555.6H315V555.7H314V555.3H313V559.7H312V553.8H311V554.4H310V559.0H309V559.0H308V554.1H307V559.2H306V553.8H305V557.2H304V554.6H303V525.0H302V525.0H301V529.4H300V533.8H299V533.8H298V533.8H297V533.8H296V533.8H295V533.8H294V537.2H293V543.4H292V546.3H291V554.7H290V558.5H289V552.5H288V558.0H287V551.0H286V560.0H285V558.5H284V557.3H283V558.7H282V552.3H281V551.1H280V551.8H279V553.1H278V558.6H277V560.0H276V547.2H275V545.5H274V546.1H273V544.9H272V545.1H271V545.5H270V545.1H269V556.6H268V556.9H267V559.5H266V545.6H265V548.8H264V551.4H263V546.7H262V555.9H261V545.6H260V554.5H259V552.2H258V560.0H257V558.6H256V557.1H255V545.7H254V548.6H253V550.6H252V546.3H251V558.4H250V560.0H249V544.1H248V552.9H247V557.6H246V560.0H245V552.5H244V558.4H243V558.5H242V546.0H241V559.9H240V553.6H239V551.2H238V556.5H237V557.7H236V555.2H235V554.7H234V555.5H233V547.7H232V554.6H231V543.3H230V545.4H229V549.3H228V545.2H227V550.1H226V549.5H225V555.8H224V553.6H223V547.2H222V550.5H221V548.3H220V560.0H219V556.3H218V548.7H217V560.0H216V550.4H215V553.4H214V557.1H213V552.4H212V560.0H211V560.0H210V560.0H209V559.4H208V560.0H207V559.8H206V560.0H205V559.9H204V559.5H203V559.8H202V560.0H201V560.0H200V559.4H199V559.4H198V560.0H197V559.4H196V559.6H195V560.0H194V560.0H193V560.0H192V560.0H191V560.0H190V559.8H189V560.0H188V559.5H187V560.0H186V560.0H185V560.0H184V560.0H183V560.0H182V559.8H181V560.0H180V560.0H179V559.6H178V559.6H177V559.8H176V560.0H175V560.0H174V560.0H173V560.0H172V560.0H171V559.5H170V559.0H169V559.7H168V560.0H167V559.8H166V559.4H165V559.1H164V559.7H163V560.0H162V559.4H161V560.0H160V560.0H159V559.7H158V560.0H157V560.0H156V559.7H155V560.0H154V559.6H153V559.4H152V560.0H151V560.0H150V560.0H149V559.9H148V560.0H147V560.0H146V559.0H145V560.0H144V559.5H143V559.8H142V559.9H141V559.2H140V538.0H139V549.7H138V555.1H137V538.4H136V555.2H135V555.7H134V544.9H133V544.0H132V552.5H131V547.3H130V547.0H129V559.2H128V556.0H127V555.9H126V542.9H125V553.2H124V534.7H123V542.3H122V533.7H121V543.2H120V555.9H119V558.7H118V536.7H117V538.6H116V558.2H115V546.1H114V545.7H113V546.4H112V544.9H111V546.6H110V560.0H109V560.0H108V555.7H107V554.6H106V549.6H105V545.8H104V558.5H103V550.7H102V545.2H101V556.9H100V560.0H99V553.7H98V553.6H97V556.2H96V557.8H95V556.4H94V557.8H93V560.0H92V557.1H91V559.7H90V549.4H89V559.2H88V548.7H87V550.3H86V547.6H85V553.8H84V560.0H83V560.0H82V560.0H81V552.0H80V560.0H79V560.0H78V560.0H77V560.0H76V556.7H75V550.3H74V554.3H73V560.0H72V559.9H71V559.5H70V559.2H69V560.0H68V559.1H67V560.0H66V559.8H65V559.5H64V560.0H63V559.8H62V560.0H61V560.0H60V560.0H59V560.0H58V560.0H57V559.6H56V560.0H55V560.0H54V560.0H53V560.0H52V560.0H51V560.0H50V560.0H49V560.0H48V560.0H47V559.9H46V560.0H45V560.0H44V560.0H43V559.4H42V559.3H41V559.4H40V559.3H39V559.5H38V560.0H37V559.2H36V560.0H35V559.3H34V552.2H33V552.4H32V553.4H31V544.8H30V547.7H29V555.7H28V557.9H27V553.2H26V560.0H25V559.9H24V559.4H23V560.0H22V559.7H21V559.8H20V559.4H19V559.8H18V559.3H17V560.0H16V559.5H15V560.0H14V559.8H13V559.3H12V560.0H11V559.2H10V559.5H9V556.6H8V549.6H7Z" fill="#1d76d8"/>
<path d="M7,574.8H8V567.1H9V562.1H10V562.1H11V562.7H12V562.0H13V562.2H14V562.6H15V562.1H16V562.4H17V562.8H18V562.0H19V562.5H20V562.8H21V562.5H22V562.0H23V562.3H24V562.0H25V562.0H26V566.4H27V573.5H28V575.7H29V563.6H30V569.3H31V562.0H32V562.0H33V566.1H34V562.0H35V562.0H36V562.5H37V562.0H38V562.7H39V562.0H40V562.2H41V562.1H42V562.0H43V562.0H44V562.0H45V562.4H46V562.3H47V562.0H48V562.7H49V562.8H50V562.2H51V562.4H52V562.0H53V562.0H54V562.0H55V562.0H56V562.5H57V562.0H58V562.0H59V562.3H60V562.4H61V562.0H62V562.0H63V562.0H64V562.4H65V562.4H66V562.7H67V562.3H68V562.6H69V562.7H70V562.0H71V562.0H72V562.7H73V569.2H74V562.0H75V572.6H76V566.3H77V568.8H78V565.9H79V573.4H80V572.6H81V571.3H82V565.0H83V562.0H84V562.0H85V573.6H86V563.0H87V562.0H88V562.6H89V572.1H90V573.3H91V562.0H92V562.6H93V564.8H94V562.0H95V564.5H96V562.0H97V562.0H98V562.0H99V562.0H100V565.7H101V562.0H102V574.3H103V575.4H104V567.5H105V576.9H106V562.0H107V562.0H108V571.2H109V569.5H110V562.0H111V562.0H112V575.5H113V574.1H114V562.0H115V572.8H116V562.0H117V562.0H118V576.0H119V580.3H120V580.1H121V566.3H122V582.0H123V580.3H124V579.8H125V562.0H126V565.9H127V570.2H128V579.5H129V585.9H130V579.2H131V573.2H132V571.1H133V566.7H134V565.3H135V570.5H136V566.7H137V581.0H138V586.6H139V565.7H140V572.8H141V562.1H142V562.3H143V562.0H144V562.6H145V562.9H146V562.8H147V562.8H148V562.3H149V562.8H150V562.7H151V562.6H152V562.0H153V562.7H154V562.0H155V562.5H156V562.0H157V562.0H158V563.0H159V562.5H160V562.0H161V562.8H162V562.0H163V562.0H164V563.0H165V562.5H166V562.9H167V562.8H168V562.7H169V562.6H170V562.0H171V562.6H172V562.4H173V562.0H174V562.0H175V562.8H176V562.0H177V562.0H178V562.6H179V562.0H180V562.0H181V562.0H182V562.4H183V562.0H184V562.6H185V562.6H186V562.0H187V562.2H188V562.0H189V562.0H190V562.7H191V562.0H192V562.0H193V562.0H194V562.4H195V562.0H196V562.0H197V562.0H198V563.0H199V562.0H200V562.6H201V562.0H202V562.0H203V562.4H204V562.0H205V562.0H206V562.0H207V562.7H208V562.3H209V562.0H210V562.0H211V562.0H212V562.4H213V570.0H214V575.0H215V572.7H216V572.0H217V565.1H218V563.0H219V564.7H220V575.8H221V576.2H222V562.8H223V564.4H224V579.4H225V574.0H226V576.2H227V564.3H228V568.8H229V575.7H230V563.2H231V573.2H232V569.6H233V572.1H234V572.1H235V578.4H236V565.9H237V571.9H238V562.6H239V565.7H240V570.9H241V563.5H242V572.5H243V571.9H244V576.6H245V572.3H246V569.2H247V575.3H248V566.3H249V569.7H250V562.0H251V569.9H252V562.0H253V574.5H254V570.0H255V564.5H256V573.0H257V565.2H258V562.0H259V571.6H260V576.0H261V567.6H262V563.0H263V574.7H264V576.4H265V567.2H266V566.1H267V575.9H268V578.3H269V569.4H270V572.7H271V579.3H272V582.4H273V576.7H274V581.7H275V573.0H276V569.0H277V567.9H278V564.1H279V570.2H280V567.3H281V569.3H282V565.4H283V570.8H284V564.4H285V571.5H286V572.7H287V564.5H288V569.5H289V566.4H290V566.0H291V572.5H292V580.6H293V585.2H294V588.2H295V588.2H296V588.2H297V588.2H298V588.2H299V588.2H300V592.6H301V597.0H302V597.0H303V568.8H304V562.0H305V563.9H306V563.8H307V568.9H308V566.7H309V566.0H310V564.3H311V568.2H312V563.6H313V567.6H314V568.1H315V564.6H316V562.5H317V567.4H318V566.9H319V566.2H320V570.9H321V574.0H322V575.7H323V580.7H324V591.6H325V573.8H326V573.6H327V589.8H328V578.1H329V586.0H330V576.6H331V573.7H332V584.0H333V586.1H334V591.0H335V584.5H336V575.0H337V572.2H338V575.7H339V583.5H340V573.3H341V583.8H342V566.4H343V564.4H344V567.4H345V569.7H346V562.0H347V563.6H348V569.3H349V567.0H350V564.7H351V569.3H352V570.1H353V562.1H354V566.5H355V564.2H356V565.3H357V566.0H358V562.7H359V569.9H360V570.8H361V562.0H362V565.9H363V562.6H364V562.2H365V562.3H366V567.3H367V565.0H368V564.9H369V567.5H370V569.5H371V569.6H372V569.2H373V569.4H374V569.1H375V567.7H376V569.3H377V571.0H378V565.7H379V567.1H380V562.6H381V566.9H382V564.5H383V567.7H384V570.3H385V568.4H386V565.0H387V565.3H388V568.6H389V567.2H390V567.8H391V562.0H392V569.0H393V567.2H394V562.6H395V568.5H396V564.7H397V562.3H398V568.9H399V564.3H400V582.2H401V597.0H402V597.0H403V566.2H404V577.0H405V577.8H406V569.8H407V577.2H408V580.5H409V582.2H410V583.3H411V572.7H412V572.3H413V568.6H414V570.4H415V577.0H416V578.4H417V566.8H418V563.5H419V569.3H420V576.6H421V563.9H422V570.8H423V566.7H424V578.9H425V567.8H426V580.4H427V578.3H428V564.7H429V568.2H430V580.6H431V568.0H432V568.7H433V573.7H434V562.0H435V581.8H436V581.9H437V577.8H438V571.6H439V563.9H440V583.1H441V575.2H442V573.4H443V566.7H444V578.7H445V564.4H446V580.6H447V580.7H448V574.8H449V569.5H450V571.1H451V563.3H452V577.4H453V567.8H454V575.8H455V565.5H456V566.0H457V580.9H458V569.4H459V569.2H460V571.2H461V572.5H462V567.7H463V580.1H464V574.3H465V564.0H466V571.8H467V581.1H468V590.2H469V595.8H470V597.0H471V586.6H472V581.5H473V580.5H474V587.4H475V588.0H476V579.7H477V583.6H478V588.5H479V584.7H480V584.3H481V585.2H482V584.3H483V584.5H484V585.3H485V578.9H486V581.7H487V581.1H488V585.7H489V584.0H490V585.8H491V578.7H492V585.5H493V582.9H494V574.7H495V577.5H496V586.7H497V585.4H498V575.6H499V581.2H500V573.9H501V579.9H502V584.2H503V581.6H504V577.1H505V580.9H506V583.5H507V574.2H508V582.9H509V573.6H510V576.9H511V582.3H512V575.8H513V583.7H514V583.5H515V582.0H516V576.0H517V583.1H518V570.2H519V574.4H520V569.7H521V566.2H522V580.0H523V583.5H524V580.5H525V580.3H526V581.8H527V570.9H528V581.9H529V564.6H530V572.3H531V575.3H532V578.5H533V567.8H534V582.8H535V567.7H536V583.2H537V583.8H538V571.5H539V580.7H540V575.5H541V579.3H542V571.1H543V569.1H544V575.6H545V579.6H546V581.1H547V576.1H548V569.0H549V579.5H550V568.7H551V578.5H552V569.3H553V562.5H554V562.0H555V565.1H556V576.7H557V568.3H558V570.9H559V574.2H560V579.3H561V564.1H562V578.2H563V563.8H564V575.5H565V569.7H566V580.3H567V570.9H568V567.2H569V581.0H570V573.2H571V577.3H572V567.1H573V584.7H574V585.1H575V581.7H576V571.5H577V573.6H578V573.8H579V566.2H580V582.5H581V582.2H582V565.4H583V582.1H584V567.9H585V570.6H586V572.0H587V571.0H588V577.7H589V579.4H590V573.2H591V578.3H592V583.8H593V588.5H594V591.5H595V597.0H596V586.8H597V571.6H598V564.4H599V563.3H600V570.9H601V562.0H602V565.7H603V573.7H604V566.7H605V564.5H606V567.4H607V568.6H608V575.4H609V577.2H610V566.9H611V578.1H612V570.1H613V574.5H614V562.9H615V567.9H616V564.1H617V567.0H618V568.2H619V571.5H620V565.4H621V571.3H622V563.3H623V576.4H624V565.5H625V577.9H626V569.5H627V567.9H628V564.9H629V566.5H630V579.0H631V575.7H632V569.1H633V575.4H634V571.2H635V583.9H636V579.4H637V581.5H638V585.0H639V580.9H640V572.3H641V577.1H642V576.4H643V570.5H644V571.8H645V580.4H646V584.4H647V567.5H648V579.1H649V579.8H650V563.8H651V573.0H652V575.2H653V564.9H654V562.0H655V575.9H656V573.4H657V570.6H658V567.3H659V562.0H660V566.4H661V562.6H662V565.8H663V566.3H664V562.0H665V574.2H666V563.0H667V572.4H668V566.4H669V572.6H670V565.9H671V562.8H672V569.3H673V573.1H674V566.6H675V562.3H676V564.1H677V562.0H678V562.6H679V562.0H680V562.0H681V562.1H682V562.7H683V562.0H684V562.6H685V562.1H686V562.8H687V562.0H688V562.0H689V562.5H690V562.4H691V562.6H692V562.7H693V562.0H694V562.4H695V562.0H696V562.5H697V562.8H698V562.0H699V565.1H700V568.4H701V565.6H702V575.5H703V570.5H704V572.0H705V583.9H706V583.0H707V582.9H708V565.7H709V589.7H710V573.5H711V575.7H712V572.3H713V562.8H714V562.7H715V562.3H716V562.0H717V562.3H718V562.6H719V562.4H720V562.5H721V562.3H722V562.0H723V562.6H724V562.0H725V562.7H726V562.6H727V562.8H728V565.7H729V587.0H730V579.0H731V585.7H732V572.3H733V576.7H734V594.2H735V586.8H736V570.9H737V575.9H738V584.3H739V572.7H740V591.0H741V571.2H742V562.0H743V562.0H744V562.1H745V562.6H746V562.0H747V562.0H748V562.0H749V562.0H750V562.1H751V562.8H752V562.0H753V562.0H754V562.6H755V562.4H756V563.0H757V562.5H758V562.0H759V562.7H760V562.9H761V562.8H762V562.0H763V562.9H764V562.8H765V572.1H766V579.9H767V579.1H768V580.4H769V579.7H770V579.4H771V580.2H772V585.4H773V589.6H774V592.6H775V596.3H776V597.7H775V601.1H774V606.1H773V609.5H772V612.6H771V613.7H770V614.7H769V615.4H768V617.9H767V618.3H766V622.7H765V631.8H764V632.0H763V632.0H762V631.6H761V632.0H760V631.4H759V632.0H758V632.0H757V631.7H756V632.0H755V632.0H754V632.0H753V631.6H752V632.0H751V632.0H750V632.0H749V632.0H748V632.0H747V632.0H746V632.0H745V632.0H744V632.0H743V631.7H742V632.0H741V616.2H740V632.0H739V614.6H738V632.0H737V611.1H736V625.0H735V614.2H734V628.2H733V619.5H732V617.2H731V617.0H730V619.1H729V623.3H728V632.0H727V632.0H726V632.0H725V632.0H724V631.6H723V631.6H722V631.9H721V632.0H720V632.0H719V632.0H718V632.0H717V632.0H716V631.6H715V631.8H714V631.5H713V627.8H712V619.4H711V632.0H710V629.9H709V626.6H708V632.0H707V632.0H706V623.8H705V630.4H704V624.7H703V625.8H702V631.1H701V631.4H700V626.2H699V631.4H698V631.4H697V632.0H696V631.5H695V631.6H694V632.0H693V632.0H692V631.9H691V632.0H690V631.8H689V632.0H688V632.0H687V631.2H686V631.3H685V632.0H684V631.4H683V631.4H682V632.0H681V632.0H680V632.0H679V631.7H678V632.0H677V632.0H676V631.6H675V631.9H674V632.0H673V632.0H672V631.6H671V632.0H670V632.0H669V631.9H668V632.0H667V632.0H666V632.0H665V632.0H664V632.0H663V632.0H662V631.4H661V632.0H660V631.7H659V632.0H658V631.5H657V631.6H656V632.0H655V632.0H654V631.8H653V631.5H652V632.0H651V631.8H650V631.3H649V628.3H648V627.2H647V624.5H646V632.0H645V632.0H644V630.7H643V623.2H642V623.9H641V624.9H640V624.9H639V631.8H638V629.9H637V629.1H636V629.1H635V624.6H634V627.5H633V629.7H632V630.5H631V630.5H630V630.4H629V630.1H628V630.1H627V631.0H626V630.6H625V631.2H624V631.0H623V630.5H622V631.0H621V630.5H620V631.4H619V630.5H618V631.6H617V631.5H616V631.7H615V630.9H614V630.5H613V630.8H612V631.8H611V631.0H610V631.5H609V631.0H608V631.7H607V632.0H606V632.0H605V631.2H604V632.0H603V632.0H602V632.0H601V632.0H600V631.8H599V631.4H598V625.4H597V610.6H596V597.0H595V603.7H594V610.2H593V614.7H592V620.0H591V626.4H590V630.3H589V628.1H588V632.0H587V632.0H586V628.3H585V622.1H584V623.5H583V622.6H582V628.2H581V624.6H580V632.0H579V624.3H578V621.2H577V630.0H576V626.9H575V622.8H574V632.0H573V632.0H572V624.0H571V632.0H570V629.2H569V629.2H568V628.2H567V627.4H566V631.2H565V625.7H564V629.4H563V624.1H562V624.0H561V631.1H560V630.6H559V630.3H558V626.3H557V629.5H556V632.0H555V632.0H554V626.3H553V624.6H552V628.7H551V631.2H550V627.1H549V630.9H548V630.8H547V632.0H546V631.8H545V632.0H544V632.0H543V626.7H542V632.0H541V625.5H540V632.0H539V628.9H538V626.3H537V631.6H536V625.7H535V632.0H534V629.7H533V625.8H532V630.4H531V624.4H530V627.4H529V625.1H528V627.3H527V631.2H526V627.0H525V629.4H524V631.0H523V632.0H522V624.6H521V624.0H520V630.2H519V624.7H518V629.6H517V630.2H516V630.9H515V630.1H514V628.6H513V631.4H512V626.3H511V631.3H510V628.8H509V630.9H508V625.8H507V626.7H506V631.8H505V630.6H504V631.5H503V631.5H502V625.2H501V628.4H500V623.3H499V628.4H498V627.7H497V628.6H496V626.1H495V620.5H494V622.7H493V618.9H492V625.5H491V623.4H490V617.3H489V625.7H488V617.7H487V616.5H486V616.1H485V615.0H484V623.3H483V620.2H482V621.3H481V615.9H480V619.0H479V619.8H478V617.9H477V619.5H476V614.7H475V614.0H474V615.3H473V610.5H472V614.0H471V597.0H470V598.2H469V604.2H468V614.3H467V624.7H466V630.0H465V623.3H464V629.7H463V625.4H462V624.3H461V623.7H460V629.5H459V631.9H458V625.0H457V631.2H456V626.9H455V626.3H454V631.3H453V629.1H452V623.1H451V629.0H450V626.3H449V624.6H448V628.6H447V629.4H446V623.8H445V630.6H444V629.6H443V629.3H442V630.2H441V629.2H440V630.3H439V629.2H438V631.4H437V629.6H436V630.4H435V631.8H434V632.0H433V626.7H432V631.6H431V626.3H430V626.2H429V623.5H428V630.5H427V623.5H426V622.9H425V629.1H424V632.0H423V630.0H422V625.5H421V632.0H420V622.2H419V629.4H418V623.1H417V632.0H416V632.0H415V632.0H414V632.0H413V626.2H412V628.9H411V623.2H410V631.2H409V630.2H408V627.0H407V625.9H406V621.8H405V631.9H404V623.3H403V597.0H402V597.0H401V612.0H400V631.0H399V630.0H398V629.2H397V629.4H396V631.5H395V629.6H394V631.6H393V629.9H392V629.3H391V630.3H390V630.5H389V630.7H388V629.4H387V630.5H386V631.3H385V629.9H384V628.6H383V630.3H382V630.3H381V630.5H380V629.6H379V631.4H378V629.7H377V631.6H376V629.3H375V630.6H374V630.1H373V629.9H372V629.8H371V631.4H370V629.8H369V630.1H368V631.2H367V631.0H366V629.4H365V630.9H364V629.2H363V631.2H362V629.8H361V629.3H360V629.8H359V628.7H358V630.6H357V630.9H356V629.6H355V628.7H354V630.8H353V629.3H352V629.6H351V631.3H350V631.1H349V630.5H348V631.0H347V630.7H346V627.5H345V631.8H344V631.9H343V623.1H342V621.9H341V617.1H340V632.0H339V613.3H338V622.4H337V631.6H336V612.1H335V611.1H334V621.2H333V628.1H332V615.8H331V625.0H330V629.5H329V627.0H328V628.5H327V626.9H326V610.1H325V615.4H324V616.6H323V618.3H322V623.9H321V626.2H320V632.0H319V632.0H318V631.4H317V632.0H316V632.0H315V631.5H314V632.0H313V632.0H312V632.0H311V632.0H310V631.8H309V632.0H308V631.9H307V632.0H306V631.9H305V631.7H304V632.0H303V597.0H302V597.0H301V601.4H300V605.8H299V605.8H298V605.8H297V605.8H296V605.8H295V605.8H294V609.8H293V617.5H292V621.7H291V629.4H290V629.6H289V630.5H288V630.3H287V630.7H286V630.4H285V630.3H284V629.6H283V629.8H282V629.9H281V629.5H280V629.2H279V629.7H278V630.7H277V629.3H276V627.6H275V620.8H274V621.2H273V624.2H272V628.1H271V629.1H270V621.8H269V629.2H268V624.6H267V631.7H266V632.0H265V629.1H264V623.8H263V628.4H262V630.1H261V632.0H260V619.0H259V631.2H258V632.0H257V621.7H256V629.4H255V627.4H254V621.3H253V631.4H252V629.9H251V624.5H250V623.6H249V632.0H248V631.2H247V632.0H246V632.0H245V623.7H244V625.8H243V632.0H242V632.0H241V625.4H240V626.4H239V618.3H238V624.8H237V626.0H236V620.2H235V632.0H234V622.6H233V625.0H232V624.0H231V618.0H230V628.4H229V622.2H228V622.1H227V624.4H226V618.1H225V623.2H224V628.2H223V632.0H222V625.7H221V632.0H220V622.7H219V615.6H218V621.1H217V620.7H216V618.2H215V627.2H214V628.8H213V629.3H212V631.6H211V631.9H210V632.0H209V631.9H208V631.7H207V632.0H206V632.0H205V632.0H204V632.0H203V632.0H202V631.5H201V631.8H200V631.6H199V632.0H198V631.5H197V631.7H196V631.7H195V632.0H194V631.8H193V631.8H192V631.4H191V632.0H190V631.4H189V632.0H188V631.7H187V632.0H186V632.0H185V631.6H184V631.7H183V632.0H182V631.8H181V631.5H180V632.0H179V631.8H178V632.0H177V632.0H176V632.0H175V631.6H174V632.0H173V631.6H172V632.0H171V632.0H170V632.0H169V632.0H168V631.6H167V632.0H166V631.5H165V632.0H164V631.8H163V632.0H162V631.7H161V632.0H160V632.0H159V632.0H158V632.0H157V632.0H156V632.0H155V632.0H154V631.9H153V631.3H152V631.5H151V631.7H150V631.9H149V632.0H148V631.6H147V631.5H146V631.7H145V632.0H144V631.9H143V631.7H142V631.7H141V632.0H140V630.8H139V632.0H138V632.0H137V614.3H136V632.0H135V624.5H134V632.0H133V622.6H132V628.3H131V623.1H130V618.4H129V616.8H128V622.1H127V617.6H126V632.0H125V627.0H124V622.5H123V613.5H122V631.6H121V612.0H120V614.2H119V630.3H118V628.2H117V627.9H116V632.0H115V632.0H114V632.0H113V632.0H112V630.9H111V627.1H110V628.4H109V623.1H108V629.4H107V632.0H106V629.4H105V627.1H104V632.0H103V629.8H102V632.0H101V632.0H100V630.1H99V628.0H98V624.4H97V625.8H96V626.3H95V632.0H94V632.0H93V632.0H92V625.4H91V625.8H90V627.3H89V631.8H88V629.6H87V631.3H86V631.5H85V629.4H84V629.5H83V629.0H82V630.5H81V631.8H80V630.9H79V630.8H78V629.3H77V629.2H76V631.2H75V630.0H74V631.2H73V632.0H72V632.0H71V632.0H70V632.0H69V632.0H68V631.6H67V632.0H66V632.0H65V632.0H64V632.0H63V631.9H62V631.6H61V631.3H60V632.0H59V632.0H58V632.0H57V632.0H56V631.4H55V632.0H54V631.8H53V632.0H52V631.7H51V631.4H50V632.0H49V631.6H48V632.0H47V632.0H46V631.7H45V632.0H44V632.0H43V632.0H42V631.4H41V632.0H40V632.0H39V631.9H38V632.0H37V631.7H36V632.0H35V632.0H34V629.5H33V627.1H32V632.0H31V627.1H30V624.8H29V632.0H28V623.0H27V629.8H26V632.0H25V632.0H24V632.0H23V632.0H22V632.0H21V632.0H20V631.8H19V631.8H18V631.8H17V631.7H16V632.0H15V632.0H14V631.9H13V632.0H12V632.0H11V631.5H10V631.9H9V629.8H8V628.7H7Z" fill="#1d76d8"/>
<rect x="6.7" y="559.7" width="769" height="2.4" fill="#b6d7f8"/>
<rect x="73.8" y="490" width="1.3" height="142" fill="#c6def8"/>
<rect x="89.0" y="490" width="1.3" height="142" fill="#c6def8"/>
<rect x="158.7" y="490" width="1.3" height="142" fill="#c6def8"/>
<rect x="301.2" y="490" width="1.3" height="142" fill="#c6def8"/>
<rect x="401.2" y="490" width="1.3" height="142" fill="#c6def8"/>
<rect x="469.2" y="490" width="1.3" height="142" fill="#c6def8"/>
<rect x="595.4" y="490" width="1.3" height="142" fill="#c6def8"/>
<rect x="675.2" y="490" width="1.3" height="142" fill="#c6def8"/>
<rect x="90.6" y="488" width="1.2" height="146" fill="#c01c3a"/>
<polygon points="6.5,615 6.5,634.5 15.5,634.5 15.5,624" fill="#a19d99"/>
<text x="8.1" y="632" font-size="9" fill="#ffffff" font-family="Liberation Sans">1</text>
<polygon points="74.5,615 74.5,634.5 83.5,634.5 83.5,624" fill="#a19d99"/>
<text x="76.1" y="632" font-size="9" fill="#ffffff" font-family="Liberation Sans">1</text>
<polygon points="159.5,615 159.5,634.5 168.5,634.5 168.5,624" fill="#a19d99"/>
<text x="161.1" y="632" font-size="9" fill="#ffffff" font-family="Liberation Sans">1</text>
<polygon points="215.5,615 215.5,634.5 224.5,634.5 224.5,624" fill="#a19d99"/>
<text x="217.1" y="632" font-size="9" fill="#ffffff" font-family="Liberation Sans">1</text>
<polygon points="302,615 302,634.5 311,634.5 311,624" fill="#a19d99"/>
<text x="303.6" y="632" font-size="9" fill="#ffffff" font-family="Liberation Sans">1</text>
<polygon points="402.3,615 402.3,634.5 411.3,634.5 411.3,624" fill="#a19d99"/>
<text x="403.90000000000003" y="632" font-size="9" fill="#ffffff" font-family="Liberation Sans">1</text>
<polygon points="471.3,615 471.3,634.5 480.3,634.5 480.3,624" fill="#a19d99"/>
<text x="472.90000000000003" y="632" font-size="9" fill="#ffffff" font-family="Liberation Sans">1</text>
<polygon points="596.5,615 596.5,634.5 605.5,634.5 605.5,624" fill="#a19d99"/>
<text x="598.1" y="632" font-size="9" fill="#ffffff" font-family="Liberation Sans">1</text>
<polygon points="676.8,615 676.8,634.5 685.8,634.5 685.8,624" fill="#a19d99"/>
<text x="678.4" y="632" font-size="9" fill="#ffffff" font-family="Liberation Sans">1</text>
</svg>
<div style="position:absolute;left:851px;top:72px;width:119px;height:24px;background:#fdfdfd;border-radius:3px;"></div>
<div class="t" style="left:820.00px;top:77.74px;font-size:13.3px;color:#4a4a4a;letter-spacing:0.092px;">Title</div>
<div style="position:absolute;left:851px;top:102px;width:119px;height:24px;background:#fdfdfd;border-radius:3px;"></div>
<div class="t" style="left:785.60px;top:107.74px;font-size:13.3px;color:#4a4a4a;letter-spacing:0.034px;">Performer</div>
<div style="position:absolute;left:851px;top:132px;width:119px;height:24px;background:#fdfdfd;border-radius:3px;"></div>
<div class="t" style="left:816.50px;top:137.74px;font-size:13.3px;color:#4a4a4a;transform:scaleX(0.9409);transform-origin:0 0;">MCN</div>
<div class="t" style="left:857.00px;top:78.16px;font-size:12.8px;color:#404040;letter-spacing:-0.157px;">Fire Burning</div>
<div class="t" style="left:857.00px;top:108.16px;font-size:12.8px;color:#404040;letter-spacing:-0.213px;">Hot Shots</div>
<div class="t" style="left:857.00px;top:138.16px;font-size:12.8px;color:#404040;letter-spacing:0.238px;">0813285908925</div>
<div class="t" style="left:822.00px;top:168.04px;font-size:13.3px;color:#4a4a4a;">Total Length</div>
<div class="t" style="left:906.00px;top:168.04px;font-size:13.3px;color:#3a3a3a;transform:scaleX(0.9465);transform-origin:0 0;">51:56:67</div>
<div class="t" style="left:822.00px;top:197.74px;font-size:13.3px;color:#4a4a4a;letter-spacing:0.027px;">Edit</div>
<div style="position:absolute;left:851px;top:192px;width:57px;height:23px;background:linear-gradient(#3f91e8,#1d6fd6);border-radius:4px;"></div>
<div class="t" style="left:859.00px;top:197.24px;font-size:13.3px;color:#ffffff;transform:scaleX(0.8713);transform-origin:0 0;">CD Text</div>
<div style="position:absolute;left:914px;top:192px;width:57px;height:23px;background:linear-gradient(#3f91e8,#1d6fd6);border-radius:4px;"></div>
<div class="t" style="left:922.00px;top:197.24px;font-size:13.3px;color:#ffffff;letter-spacing:-0.066px;">Project</div>
<svg style="position:absolute;left:0;top:0" width="1001" height="720">
<g fill="#4a4a4a">
<polygon points="817,289 831,282.8 831,295.3"/>
<polygon points="826,289 840,282.8 840,295.3"/>
<rect x="856" y="276.7" width="5.2" height="24"/>
<rect x="865.1" y="276.7" width="5.3" height="24"/>
<polygon points="908.3,289 894.3,282.8 894.3,295.3"/>
<polygon points="900,289 886,282.8 886,295.3"/>
<polygon points="942.2,281.9 954.8,288.7 942.2,295.5"/>
<rect x="937" y="277.3" width="8.6" height="1.6"/>
<rect x="944" y="277.3" width="1.6" height="3.3"/>
<rect x="952.4" y="277.3" width="8.5" height="1.6"/>
<rect x="952.4" y="277.3" width="1.6" height="7"/>
<rect x="937" y="298.9" width="8.6" height="1.6"/>
<rect x="944" y="297.2" width="1.6" height="3.3"/>
<rect x="952.4" y="298.9" width="8.5" height="1.6"/>
<rect x="952.4" y="293.3" width="1.6" height="7.2"/>
</g></svg>
<svg style="position:absolute;left:0;top:0" width="1001" height="720">
<defs>
<linearGradient id="gL" x1="0" y1="388" x2="0" y2="446" gradientUnits="userSpaceOnUse">
<stop offset="0" stop-color="#7a1a20"/>
<stop offset="0.15" stop-color="#7a1c20"/>
<stop offset="0.4" stop-color="#774222"/>
<stop offset="0.65" stop-color="#6f6a2a"/>
<stop offset="0.9" stop-color="#5f6e27"/>
<stop offset="1" stop-color="#4d6a22"/>
</linearGradient>
<linearGradient id="gR" x1="0" y1="388" x2="0" y2="453" gradientUnits="userSpaceOnUse">
<stop offset="0" stop-color="#7a1a20"/>
<stop offset="0.12" stop-color="#7a1c20"/>
<stop offset="0.35" stop-color="#774222"/>
<stop offset="0.6" stop-color="#6f6a2a"/>
<stop offset="0.88" stop-color="#5f6e27"/>
<stop offset="1" stop-color="#4d6a22"/>
</linearGradient>
<linearGradient id="gG1" x1="0" y1="445.6" x2="0" y2="615" gradientUnits="userSpaceOnUse">
<stop offset="0" stop-color="#7ad45c"/>
<stop offset="0.09" stop-color="#66d055"/>
<stop offset="0.12" stop-color="#2cc846"/>
<stop offset="1" stop-color="#27c744"/>
</linearGradient>
<linearGradient id="gG2" x1="0" y1="453" x2="0" y2="615" gradientUnits="userSpaceOnUse">
<stop offset="0" stop-color="#72d258"/>
<stop offset="0.05" stop-color="#62cf53"/>
<stop offset="0.08" stop-color="#2cc846"/>
<stop offset="1" stop-color="#27c744"/>
</linearGradient>
<linearGradient id="gG3" x1="0" y1="460" x2="0" y2="615" gradientUnits="userSpaceOnUse">
<stop offset="0" stop-color="#8ad86c"/>
<stop offset="0.04" stop-color="#6ad25a"/>
<stop offset="0.06" stop-color="#2cc846"/>
<stop offset="1" stop-color="#27c744"/>
</linearGradient>
<linearGradient id="gM" x1="0" y1="388" x2="0" y2="461" gradientUnits="userSpaceOnUse">
<stop offset="0" stop-color="#701a1e"/>
<stop offset="0.55" stop-color="#7c1a1e"/>
<stop offset="0.72" stop-color="#6e4a22"/>
<stop offset="0.88" stop-color="#6a6a28"/>
<stop offset="1" stop-color="#4d6a22"/>
</linearGradient>
</defs>
<rect x="857.2" y="363" width="5.8" height="19.5" fill="#7a1a20"/>
<rect x="868.2" y="363" width="5.8" height="19.5" fill="#7a1a20"/>
<rect x="857.2" y="388" width="5.8" height="58" fill="url(#gL)"/>
<rect x="857.2" y="445.6" width="5.8" height="169.4" fill="url(#gG1)"/>
<rect x="868.2" y="388" width="5.8" height="65" fill="url(#gR)"/>
<rect x="868.2" y="453" width="5.8" height="162" fill="url(#gG2)"/>
<rect x="914.2" y="388" width="5.8" height="72" fill="url(#gM)"/>
<rect x="914.2" y="460" width="5.8" height="155" fill="url(#gG3)"/>
</svg>
<div class="t" style="left:845.72px;top:382.90px;font-size:10.4px;color:#3c3c3c;">0</div>
<div class="t" style="left:836.47px;top:457.70px;font-size:10.4px;color:#3c3c3c;">-20</div>
<div class="t" style="left:836.47px;top:535.70px;font-size:10.4px;color:#3c3c3c;">-40</div>
<div class="t" style="left:836.47px;top:609.70px;font-size:10.4px;color:#3c3c3c;">-60</div>
<div class="t" style="left:902.22px;top:382.90px;font-size:10.4px;color:#3c3c3c;">9</div>
<div class="t" style="left:902.22px;top:407.70px;font-size:10.4px;color:#3c3c3c;">6</div>
<div class="t" style="left:902.22px;top:432.70px;font-size:10.4px;color:#3c3c3c;">3</div>
<div class="t" style="left:902.22px;top:457.70px;font-size:10.4px;color:#3c3c3c;">0</div>
<div class="t" style="left:892.97px;top:609.70px;font-size:10.4px;color:#3c3c3c;">-18</div>
<div class="t" style="left:904.00px;top:368.40px;font-size:10.4px;color:#3c3c3c;transform:scaleX(0.9388);transform-origin:0 0;">9.4 (I)</div>
<div class="t" style="left:857.50px;top:617.70px;font-size:10.4px;color:#3c3c3c;">L</div>
<div class="t" style="left:868.50px;top:617.70px;font-size:10.4px;color:#3c3c3c;">R</div>
<div class="t" style="left:914.00px;top:617.70px;font-size:10.4px;color:#3c3c3c;">M</div>
<div style="position:absolute;left:16px;top:663px;width:407px;height:8px;background:#ffffff;border-radius:3px;"></div>
<div style="position:absolute;left:90.5px;top:662.4px;width:9px;height:9px;border-radius:50%;background:radial-gradient(circle at 45% 40%,#4a8fe0,#2a6cc4);"></div>
<div style="position:absolute;left:441px;top:646px;width:118px;height:42px;background:#ffffff;"></div>
<div class="t" style="left:459.40px;top:650.02px;font-size:34px;color:#404040;transform:scaleX(0.9520);transform-origin:0 0;-webkit-text-stroke:0.4px #404040;">01:05</div>
<svg style="position:absolute;left:855px;top:659.7px" width="14" height="14"><defs><linearGradient id="ck" x1="0" y1="0" x2="0.4" y2="1"><stop offset="0" stop-color="#4d8fd6"/><stop offset="1" stop-color="#2a62b0"/></linearGradient></defs><circle cx="7" cy="7" r="7" fill="url(#ck)"/><path d="M3.3,4.3 L6.6,12 L11.6,2.2" fill="none" stroke="#e4eefa" stroke-width="2.1" stroke-linejoin="miter"/></svg>
<div class="t" style="left:877.70px;top:660.14px;font-size:13.3px;color:#4a4a4a;letter-spacing:-0.216px;">Table Locked</div>
<div class="t" style="left:15.50px;top:701.83px;font-size:13.2px;color:#404040;letter-spacing:-0.057px;">Registered to Pieter Stenekes - Sonoris Audio Engineering</div>
</body></html>
